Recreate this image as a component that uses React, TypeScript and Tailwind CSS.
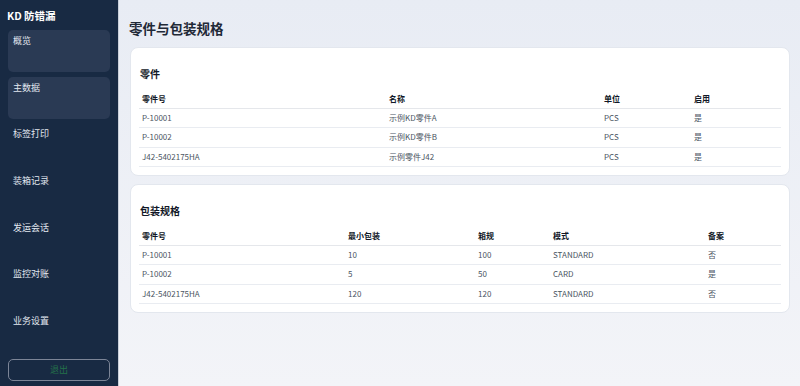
const navItems = ["概览", "主数据", "标签打印", "装箱记录", "发运会话", "监控对账", "业务设置"];

const parts = [
  { no: "P-10001", name: "示例KD零件A", unit: "PCS", enabled: "是" },
  { no: "P-10002", name: "示例KD零件B", unit: "PCS", enabled: "是" },
  { no: "J42-5402175HA", name: "示例零件J42", unit: "PCS", enabled: "是" },
];

const packs = [
  { no: "P-10001", min: "10", box: "100", mode: "STANDARD", filed: "否" },
  { no: "P-10002", min: "5", box: "50", mode: "CARD", filed: "是" },
  { no: "J42-5402175HA", min: "120", box: "120", mode: "STANDARD", filed: "否" },
];

function Card({ title, children }: { title: string; children: React.ReactNode }) {
  return (
    <div className="rounded-[8px] border border-[#e3e7ee] bg-white px-[8px] pt-[19px] pb-[8px]">
      <h2 className="text-[10px] leading-[14px] font-bold text-[#111827] mb-[10px] pl-[1px]">{title}</h2>
      {children}
    </div>
  );
}

const th = "h-[17px] px-[3px] text-left align-middle text-[8px] font-bold text-[#111827] border-b border-[#e5e7eb]";
const td = "h-[19.5px] px-[3px] text-left align-middle text-[8px] text-[#4b5563] border-b border-[#e9ecf1]";

export default function App() {
  return (
    <div
      className="w-[800px] h-[386px] flex overflow-hidden"
      style={{ fontFamily: '"Noto Sans CJK SC", "Noto Sans", sans-serif' }}
    >
      {/* Sidebar */}
      <aside className="w-[119px] shrink-0 bg-[#182a43] border-r border-[#c9cfd9] flex flex-col px-[8px] pt-[8px] pb-[5px]">
        <div className="text-[10.5px] leading-[16px] font-bold text-white mb-[6px] -ml-[1px]">KD 防错漏</div>
        <nav className="flex flex-col gap-[4.7px]">
          {navItems.map((item, i) => (
            <div
              key={item}
              className={`h-[42px] rounded-[5px] px-[5px] pt-[5px] text-[9px] leading-[12px] text-[#e2e8f0] ${
                i < 2 ? "bg-[#2a3a54]" : ""
              }`}
            >
              {item}
            </div>
          ))}
        </nav>
        <button className="mt-auto h-[22px] rounded-[5px] border border-[#7c8597] text-[9px] text-[#24714a]">
          退出
        </button>
      </aside>

      {/* Main */}
      <main className="flex-1 bg-gradient-to-b from-[#e8ecf4] to-[#f3f4f8] pl-[11px] pr-[10px] pt-[19px]">
        <h1 className="text-[13.5px] leading-[18px] font-bold text-[#1f2937] mb-[10px] -ml-[1px]">零件与包装规格</h1>
        <div className="flex flex-col gap-[8px]">
          <Card title="零件">
            <table className="w-full border-collapse table-fixed">
              <colgroup>
                <col className="w-[247px]" />
                <col className="w-[215px]" />
                <col className="w-[90px]" />
                <col />
              </colgroup>
              <thead>
                <tr>
                  <th className={th}>零件号</th>
                  <th className={th}>名称</th>
                  <th className={th}>单位</th>
                  <th className={th}>启用</th>
                </tr>
              </thead>
              <tbody>
                {parts.map((p) => (
                  <tr key={p.no}>
                    <td className={td}>{p.no}</td>
                    <td className={td}>{p.name}</td>
                    <td className={td}>{p.unit}</td>
                    <td className={td}>{p.enabled}</td>
                  </tr>
                ))}
              </tbody>
            </table>
          </Card>
          <Card title="包装规格">
            <table className="w-full border-collapse table-fixed">
              <colgroup>
                <col className="w-[206px]" />
                <col className="w-[130px]" />
                <col className="w-[75px]" />
                <col className="w-[155px]" />
                <col />
              </colgroup>
              <thead>
                <tr>
                  <th className={th}>零件号</th>
                  <th className={th}>最小包装</th>
                  <th className={th}>箱规</th>
                  <th className={th}>模式</th>
                  <th className={th}>备案</th>
                </tr>
              </thead>
              <tbody>
                {packs.map((p) => (
                  <tr key={p.no}>
                    <td className={td}>{p.no}</td>
                    <td className={td}>{p.min}</td>
                    <td className={td}>{p.box}</td>
                    <td className={td}>{p.mode}</td>
                    <td className={td}>{p.filed}</td>
                  </tr>
                ))}
              </tbody>
            </table>
          </Card>
        </div>
      </main>
    </div>
  );
}
